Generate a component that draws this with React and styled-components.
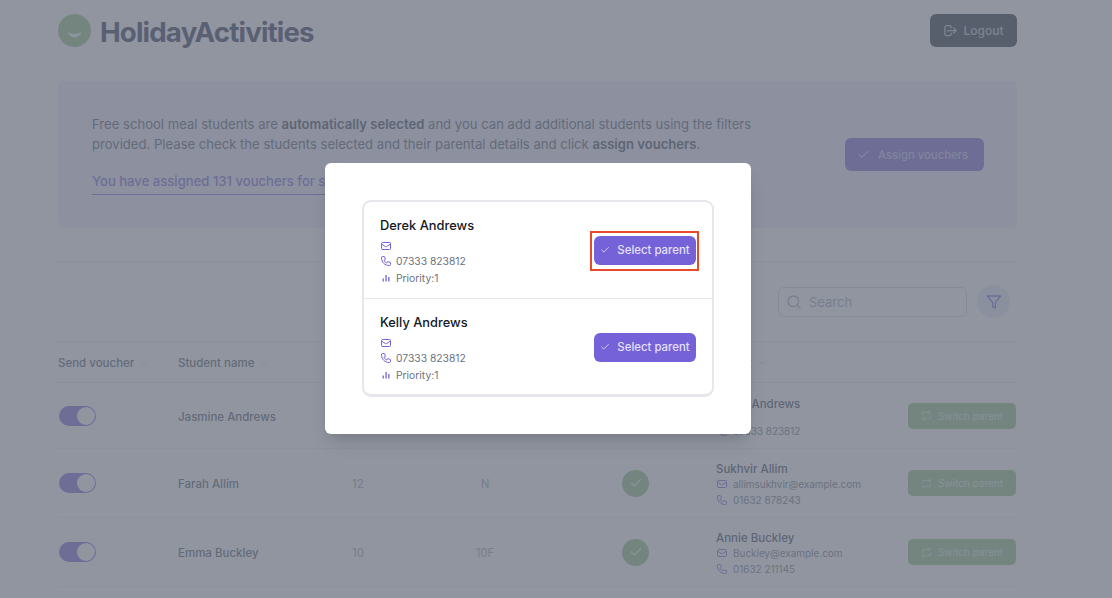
import React from "react";
import styled, { createGlobalStyle } from "styled-components";
import { FiCheck, FiChevronDown, FiFilter, FiRepeat, FiSearch } from "react-icons/fi";
import { HiOutlineLogout, HiOutlineMail, HiOutlinePhone } from "react-icons/hi";

const PURPLE = "#7562d8";
const GREEN = "#8fbf80";

const Global = createGlobalStyle`
  html, body { margin: 0; padding: 0; background: #fff; overflow: hidden; }
  body { font-family: Inter, "Liberation Sans", sans-serif; }
  * { box-sizing: border-box; }
`;

const Viewport = styled.div`
  position: relative;
  width: 1112px;
  height: 598px;
  overflow: hidden;
`;
const Page = styled.div`
  padding: 14px 95px 0 58px;
`;
const Header = styled.header`
  display: flex;
  align-items: center;
  justify-content: space-between;
  height: 33px;
  margin-bottom: 34px;
`;
const Brand = styled.div`
  display: flex;
  align-items: center;
  gap: 9px;
`;
const BrandName = styled.span`
  padding-top: 2px;
  font-family: Inter, sans-serif;
  font-size: 27.7px;
  font-weight: 700;
  letter-spacing: -0.85px;
  color: #2a2c4c;
`;
const Logout = styled.button`
  display: flex;
  align-items: center;
  justify-content: center;
  gap: 5px;
  width: 87px;
  height: 33px;
  border: 0;
  border-radius: 6px;
  background: #1f2937;
  color: #b4b8c4;
  font: 500 12px Inter, sans-serif;
`;
const Panel = styled.section`
  display: flex;
  align-items: center;
  justify-content: space-between;
  height: 147px;
  padding: 0 33px 0 34px;
  border-radius: 6px;
  background: #eeecfa;
`;
const Intro = styled.div`
  width: 680px;
  font-size: 13.1px;
  line-height: 20px;
  color: #4b5563;
  b { font-weight: 600; color: #374151; }
  p { margin: 0; }
`;
const Assigned = styled.div`
  display: inline-block;
  margin-top: 17px;
  padding-bottom: 3px;
  width: 400px;
  border-bottom: 1px solid ${PURPLE};
  font-weight: 500;
  color: ${PURPLE};
`;
const AssignButton = styled.button`
  display: flex;
  align-items: center;
  justify-content: center;
  gap: 8px;
  width: 139px;
  height: 33px;
  padding: 0 12px 0 8px;
  border: 0;
  border-radius: 6px;
  background: ${PURPLE};
  color: #c4bdee;
  font: 500 11.3px Inter, sans-serif;
`;
const Toolbar = styled.div`
  display: flex;
  align-items: center;
  justify-content: flex-end;
  gap: 10px;
  height: 81px;
  margin-top: 33px;
  padding: 0 7px 0 0;
  border-top: 1px solid #e5e7eb;
  border-bottom: 1px solid #e5e7eb;
`;
const Search = styled.div`
  display: flex;
  align-items: center;
  gap: 7px;
  width: 189px;
  height: 30px;
  padding: 0 7px;
  border: 1px solid #cfd3da;
  border-radius: 6px;
  color: #9ca3af;
  font-size: 13px;
`;
const FilterButton = styled.div`
  display: flex;
  align-items: center;
  justify-content: center;
  width: 33px;
  height: 33px;
  border-radius: 50%;
  background: #ece9fb;
  color: ${PURPLE};
`;
const Grid = styled.div`
  display: grid;
  grid-template-columns: 120px 174px 100px 66px 198px 1fr auto;
  align-items: center;
  padding-right: 1px;
  border-bottom: 1px solid #eef0f3;
`;
const HeadRow = styled(Grid)`
  height: 41px;
  border-bottom-color: #e5e7eb;
`;
const HeadCell = styled.div`
  display: flex;
  align-items: center;
  gap: 5px;
  padding-top: 2px;
  font-size: 11.5px;
  font-weight: 500;
  color: #4b5563;
  svg { color: #c3c7cf; }
`;
const ParentHead = styled(HeadCell)`
  grid-column: 6;
`;
const Row = styled(Grid)`
  min-height: 66px;
`;
const Toggle = styled.div`
  display: flex;
  justify-content: flex-end;
  align-items: center;
  width: 37px;
  height: 20px;
  margin-left: 1px;
  padding: 1px;
  border-radius: 10px;
  background: ${PURPLE};
`;
const Knob = styled.div`
  width: 18px;
  height: 18px;
  border-radius: 50%;
  background: #fff;
`;
const StudentName = styled.div`
  padding-top: 2px;
  font-size: 11.5px;
  font-weight: 500;
  color: #4b5563;
`;
const Muted = styled.div`
  padding-top: 2px;
  font-size: 11.5px;
  color: #9ca3af;
  text-align: ${(p) => p.$align || "left"};
`;
const CheckCol = styled.div`
  padding-left: 104px;
`;
const CheckCircle = styled.div`
  display: flex;
  align-items: center;
  justify-content: center;
  width: 27px;
  height: 27px;
  border-radius: 50%;
  background: ${GREEN};
  color: #e8f5e0;
`;
const Parent = styled.div`
  padding: 13px 0 9px;
`;
const ParentName = styled.div`
  font-size: 11.5px;
  font-weight: 500;
  line-height: 14px;
  color: #374151;
`;
const Detail = styled.div`
  display: flex;
  align-items: center;
  gap: 5px;
  font-size: 9.95px;
  line-height: 16px;
  color: #6b7280;
  svg { color: ${PURPLE}; flex: none; }
`;
const SwitchButton = styled.button`
  display: flex;
  align-items: center;
  justify-content: center;
  gap: 6px;
  width: 108px;
  height: 26px;
  border: 0;
  border-radius: 5px;
  background: ${GREEN};
  color: #dde8d8;
  font: 400 10px Inter, sans-serif;
`;
const Overlay = styled.div`
  position: absolute;
  inset: 0;
  background: rgba(107, 114, 128, 0.75);
`;
const Modal = styled.div`
  position: absolute;
  left: 325px;
  top: 163px;
  width: 426px;
  height: 271px;
  padding: 37px;
  border-radius: 6px;
  background: #fff;
  box-shadow: 0 12px 20px -5px rgba(0, 0, 0, 0.12), 0 6px 8px -4px rgba(0, 0, 0, 0.08);
`;
const ParentCard = styled.div`
  height: 197px;
  border: 2px solid #e5e7eb;
  border-bottom-width: 3px;
  border-radius: 9px;
`;
const ParentOption = styled.div`
  display: flex;
  align-items: center;
  justify-content: space-between;
  height: 96px;
  padding: 0 16px;
  & + & { border-top: 1px solid #e5e7eb; height: 97px; }
`;
const OptionText = styled.div`
  align-self: flex-start;
  margin-top: 15px;
`;
const OptionName = styled.div`
  font-size: 12.85px;
  font-weight: 500;
  line-height: 18px;
  color: #111827;
`;
const OptionLines = styled.div`
  display: flex;
  flex-direction: column;
  margin-top: 4.5px;
  gap: 1px;
`;
const OptionDetail = styled(Detail)`
  font-size: 10.3px;
  gap: 4px;
`;
const SelectButton = styled.button`
  position: relative;
  display: flex;
  align-items: center;
  justify-content: center;
  gap: 7px;
  width: 102px;
  height: 29px;
  border: 0;
  border-radius: 6px;
  background: ${PURPLE};
  color: #e4e0fa;
  font: 500 11.4px Inter, sans-serif;
  &::after {
    content: "";
    display: ${(p) => (p.$highlighted ? "block" : "none")};
    position: absolute;
    inset: -5px -3px -6px -4px;
    border: 2px solid #e8492b;
  }
`;

const Bars = () => (
  <svg width="12" height="12" viewBox="0 0 12 12" fill="currentColor">
    <rect x="2.6" y="6.5" width="1.3" height="3" />
    <rect x="5.4" y="3" width="1.3" height="6.5" />
    <rect x="8.2" y="5" width="1.3" height="4.5" />
  </svg>
);

const Logo = () => (
  <svg width="33" height="33" viewBox="0 0 33 33">
    <circle cx="16.5" cy="16.5" r="16.5" fill={GREEN} />
    <path d="M9.5 18c4.2 2.6 9.8 2.6 14 0-1 3.6-3.8 5.2-7 5.2s-6-1.6-7-5.2z" fill="#f2faec" />
  </svg>
);

const students = [
  { name: "Jasmine Andrews", year: "", form: "", parent: "Derek Andrews", email: "", phone: "07333 823812" },
  { name: "Farah Allim", year: "12", form: "N", parent: "Sukhvir Allim", email: "allimsukhvir@example.com", phone: "01632 878243" },
  { name: "Emma Buckley", year: "10", form: "10F", parent: "Annie Buckley", email: "Buckley@example.com", phone: "01632 211145" },
];

const options = [
  { name: "Derek Andrews", phone: "07333 823812", highlighted: true },
  { name: "Kelly Andrews", phone: "07333 823812", highlighted: false },
];

export default function App() {
  return (
    <Viewport>
      <Global />
      <Page>
        <Header>
          <Brand>
            <Logo />
            <BrandName>HolidayActivities</BrandName>
          </Brand>
          <Logout>
            <HiOutlineLogout size={15} />
            Logout
          </Logout>
        </Header>
        <Panel>
          <Intro>
            <p>
              Free school meal students are <b>automatically selected</b> and you can add additional students using the filters
              provided. Please check the students selected and their parental details and click <b>assign vouchers</b>.
            </p>
            <Assigned>You have assigned 131 vouchers for students</Assigned>
          </Intro>
          <AssignButton>
            <FiCheck size={13} />
            Assign vouchers
          </AssignButton>
        </Panel>
        <Toolbar>
          <Search>
            <FiSearch size={16} />
            Search
          </Search>
          <FilterButton>
            <FiFilter size={16} />
          </FilterButton>
        </Toolbar>
        <HeadRow>
          <HeadCell>Send voucher <FiChevronDown size={10} /></HeadCell>
          <HeadCell>Student name <FiChevronDown size={10} /></HeadCell>
          <ParentHead>Parent <FiChevronDown size={10} /></ParentHead>
        </HeadRow>
        {students.map((s) => (
          <Row key={s.name}>
            <Toggle><Knob /></Toggle>
            <StudentName>{s.name}</StudentName>
            <Muted>{s.year}</Muted>
            <Muted $align="center">{s.form}</Muted>
            <CheckCol>
              {s.year && <CheckCircle><FiCheck size={14} /></CheckCircle>}
            </CheckCol>
            <Parent>
              <ParentName>{s.parent}</ParentName>
              <Detail><HiOutlineMail size={12} />{s.email}</Detail>
              <Detail><HiOutlinePhone size={12} />{s.phone}</Detail>
            </Parent>
            <SwitchButton>
              <FiRepeat size={11} />
              Switch parent
            </SwitchButton>
          </Row>
        ))}
      </Page>
      <Overlay />
      <Modal>
        <ParentCard>
          {options.map((o) => (
            <ParentOption key={o.name}>
              <OptionText>
                <OptionName>{o.name}</OptionName>
                <OptionLines>
                  <OptionDetail><HiOutlineMail size={12} /></OptionDetail>
                  <OptionDetail><HiOutlinePhone size={12} />{o.phone}</OptionDetail>
                  <OptionDetail><Bars />Priority:1</OptionDetail>
                </OptionLines>
              </OptionText>
              <SelectButton $highlighted={o.highlighted}>
                <FiCheck size={10} />
                Select parent
              </SelectButton>
            </ParentOption>
          ))}
        </ParentCard>
      </Modal>
    </Viewport>
  );
}
